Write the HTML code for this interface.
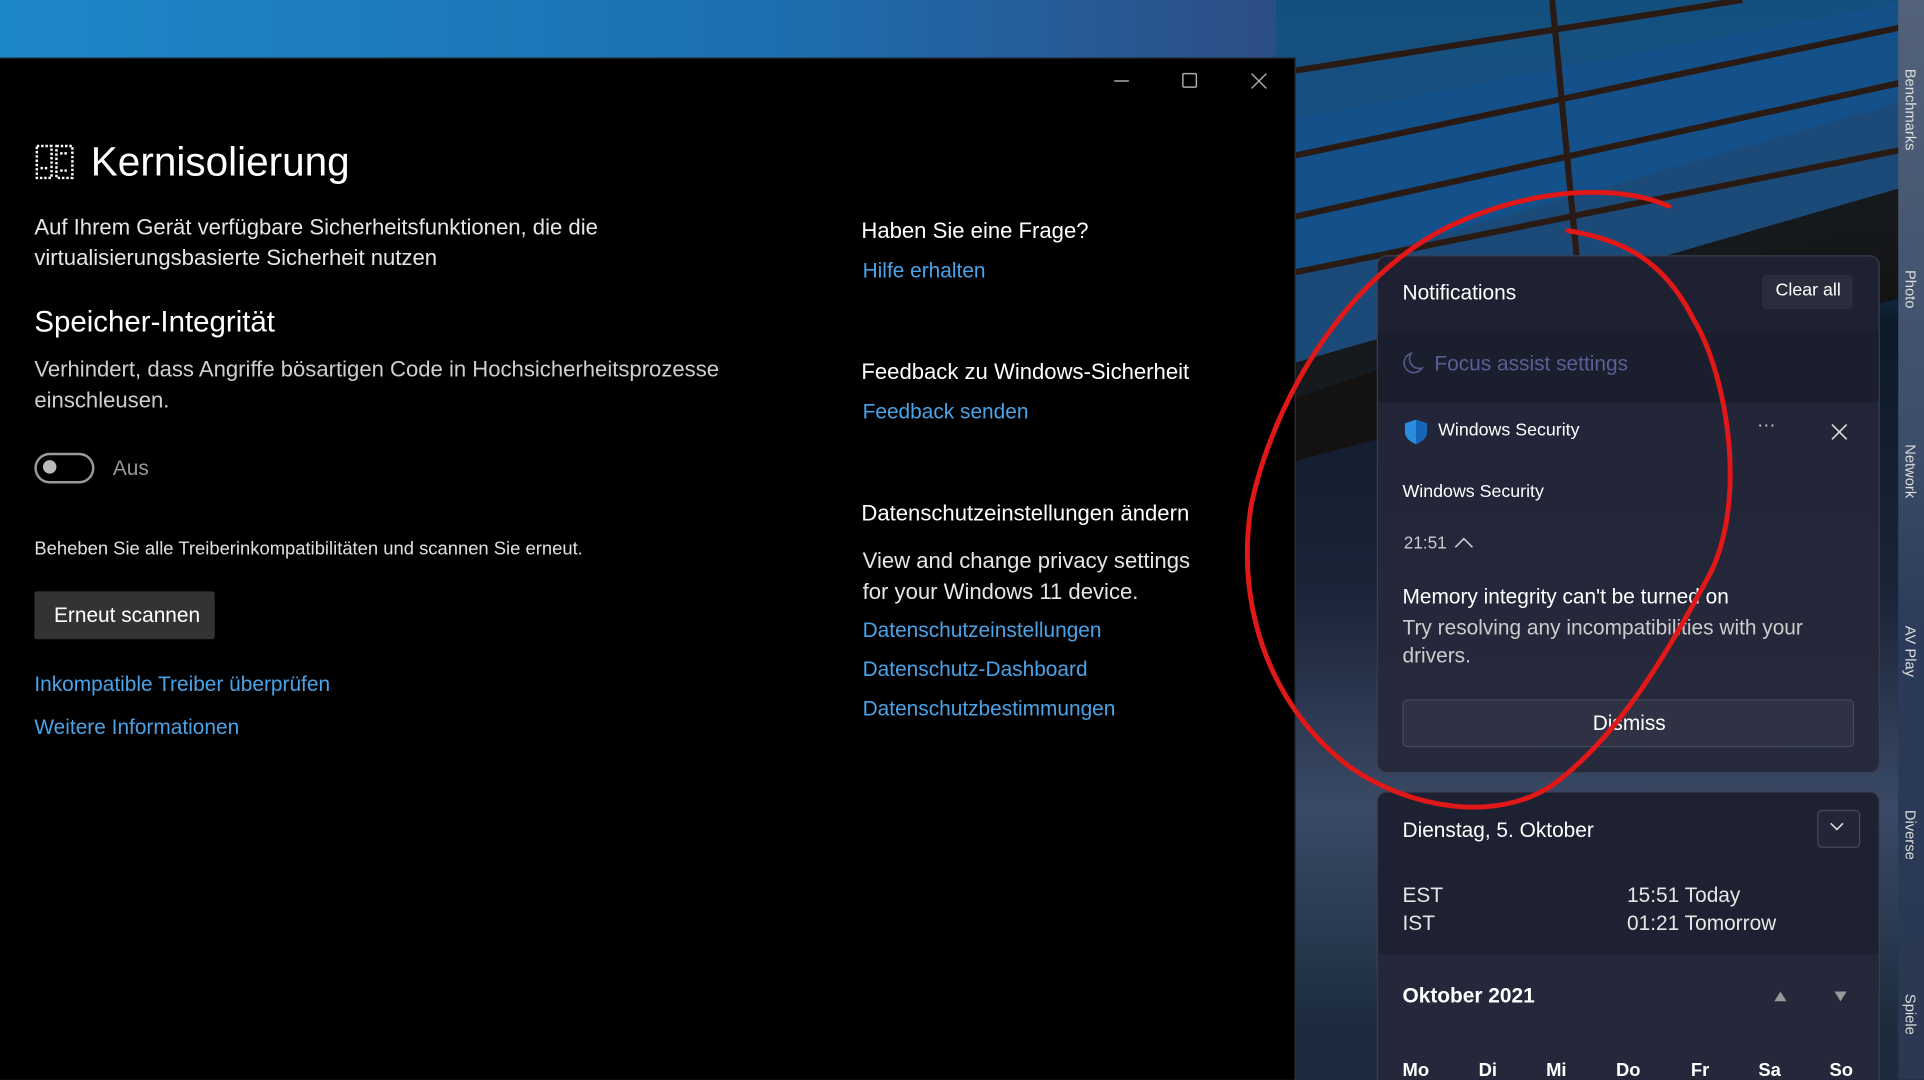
<!DOCTYPE html>
<html><head><meta charset="utf-8"><style>
html,body{margin:0;padding:0;width:1924px;height:1080px;overflow:hidden;background:#0a1a2e}
#s{position:absolute;left:0;top:0;width:1568px;height:880px;transform:scale(1.22704);transform-origin:0 0;font-family:"Liberation Sans",sans-serif;overflow:hidden}
.a{position:absolute;white-space:nowrap}
.w{color:#fff}.g{color:#cfcfcf}.l{color:#4aa3e8}
</style></head><body><div id="s">
<!-- background -->
<div class="a" style="left:0;top:0;width:1568px;height:880px;background:linear-gradient(90deg,#1d88c9 0%,#1d6fb0 40%,#2c4f88 65%,#1f3d6e 100%)"></div>
<div class="a" style="left:1040px;top:0;width:520px;height:880px;background:linear-gradient(180deg,#14507f 0%,#1a4e80 20%,#0c1a28 30%,#1b2438 55%,#3a4a66 75%,#1c2c3e 95%)"></div>
<svg class="a" style="left:1040px;top:0" width="520" height="880">
<polygon points="0,100 520,0 520,150 0,330" fill="#14508a"/>
<polygon points="0,230 520,80 520,170 0,320" fill="#1c4a78"/>
<polygon points="0,300 520,150 520,240 0,380" fill="#15100c" opacity="0.85"/>
<g stroke="#2a1a14" stroke-width="5"><line x1="0" y1="60" x2="380" y2="0"/><line x1="0" y1="130" x2="520" y2="20"/><line x1="0" y1="180" x2="520" y2="65"/><line x1="0" y1="225" x2="520" y2="120"/><line x1="225" y1="0" x2="245" y2="210"/></g>
</svg>
<!-- side strip -->
<div class="a" style="left:1547px;top:0;width:21px;height:880px;background:linear-gradient(180deg,#53627a,#3c4e6a 40%,#2a3a58 60%,#2a3850)"></div>
<div class="a" style="left:1550px;top:56px;writing-mode:vertical-rl;font-size:12px;color:#ddd">Benchmarks</div>
<div class="a" style="left:1550px;top:220px;writing-mode:vertical-rl;font-size:12px;color:#ddd">Photo</div>
<div class="a" style="left:1550px;top:362px;writing-mode:vertical-rl;font-size:12px;color:#ddd">Network</div>
<div class="a" style="left:1550px;top:510px;writing-mode:vertical-rl;font-size:12px;color:#ddd">AV Play</div>
<div class="a" style="left:1550px;top:660px;writing-mode:vertical-rl;font-size:12px;color:#ddd">Diverse</div>
<div class="a" style="left:1550px;top:810px;writing-mode:vertical-rl;font-size:12px;color:#ddd">Spiele</div>
<!-- window -->
<div class="a" style="left:0;top:47px;width:1055px;height:840px;background:#000;border-right:1px solid #333;border-top:1px solid #222"></div>
<svg class="a" style="left:900px;top:55px" width="140" height="22" stroke="#aaa" stroke-width="1.2" fill="none">
<line x1="8" y1="11" x2="20" y2="11"/><rect x="64" y="5" width="11" height="11" rx="1"/><line x1="120" y1="5" x2="132" y2="17"/><line x1="132" y1="5" x2="120" y2="17"/></svg>
<svg class="a" style="left:28px;top:117px" width="33" height="30" fill="none" stroke="#fff" stroke-width="2" stroke-dasharray="2 1.5"><rect x="2" y="2" width="12" height="26"/><rect x="18" y="2" width="13" height="26"/><line x1="5" y1="20" x2="11" y2="20"/><line x1="21" y1="22" x2="28" y2="22"/><line x1="21" y1="8" x2="28" y2="8"/></svg>
<div class="a w" style="left:74px;top:113px;font-size:33px;font-weight:300">Kernisolierung</div>
<div class="a" style="left:28px;top:173px;font-size:18px;line-height:24.5px;color:#e6e6e6">Auf Ihrem Gerät verfügbare Sicherheitsfunktionen, die die<br>virtualisierungsbasierte Sicherheit nutzen</div>
<div class="a w" style="left:28px;top:249px;font-size:24px">Speicher-Integrität</div>
<div class="a g" style="left:28px;top:289px;font-size:18px;line-height:24.5px">Verhindert, dass Angriffe bösartigen Code in Hochsicherheitsprozesse<br>einschleusen.</div>
<div class="a" style="left:28px;top:369px;width:45px;height:21px;border:2px solid #999;border-radius:14px"></div>
<div class="a" style="left:35px;top:375px;width:11px;height:11px;border-radius:50%;background:#bbb"></div>
<div class="a" style="left:92px;top:372px;font-size:17px;color:#999">Aus</div>
<div class="a" style="left:28px;top:439px;font-size:15px;color:#e0e0e0">Beheben Sie alle Treiberinkompatibilitäten und scannen Sie erneut.</div>
<div class="a" style="left:28px;top:482px;width:147px;height:39px;background:#333;border-radius:2px"></div>
<div class="a w" style="left:44px;top:492px;font-size:17px">Erneut scannen</div>
<div class="a l" style="left:28px;top:548px;font-size:17px">Inkompatible Treiber überprüfen</div>
<div class="a l" style="left:28px;top:583px;font-size:17px">Weitere Informationen</div>
<div class="a w" style="left:702px;top:178px;font-size:18px">Haben Sie eine Frage?</div>
<div class="a l" style="left:703px;top:211px;font-size:17px">Hilfe erhalten</div>
<div class="a w" style="left:702px;top:293px;font-size:18px">Feedback zu Windows-Sicherheit</div>
<div class="a l" style="left:703px;top:326px;font-size:17px">Feedback senden</div>
<div class="a w" style="left:702px;top:408px;font-size:18px">Datenschutzeinstellungen ändern</div>
<div class="a" style="left:703px;top:445px;font-size:18px;line-height:24.5px;color:#e6e6e6">View and change privacy settings<br>for your Windows 11 device.</div>
<div class="a l" style="left:703px;top:504px;font-size:17px">Datenschutzeinstellungen</div>
<div class="a l" style="left:703px;top:536px;font-size:17px">Datenschutz-Dashboard</div>
<div class="a l" style="left:703px;top:568px;font-size:17px">Datenschutzbestimmungen</div>
<!-- notification panel -->
<div class="a" style="left:1122px;top:208px;width:408px;height:420px;background:#1e2131;border:1px solid #3a3e50;border-radius:8px;overflow:hidden">
 <div class="a" style="left:0;top:62px;width:408px;height:57px;background:#1b1e2d"></div>
 <div class="a" style="left:0;top:119px;width:408px;height:301px;background:linear-gradient(180deg,#222538,#262a3c)"></div>
</div>
<div class="a w" style="left:1143px;top:229px;font-size:17px">Notifications</div>
<div class="a" style="left:1436px;top:224px;width:74px;height:28px;background:#2a2d3c;border-radius:4px"></div>
<div class="a w" style="left:1447px;top:229px;font-size:14.5px">Clear all</div>
<svg class="a" style="left:1142px;top:286px" width="20" height="20"><path d="M8 2 A8 8 0 1 0 17 14 A8 8 0 0 1 8 2Z" fill="none" stroke="#555a88" stroke-width="1.3"/></svg>
<div class="a" style="left:1169px;top:287px;font-size:17px;color:#5a5f95">Focus assist settings</div>
<svg class="a" style="left:1143px;top:341px" width="22" height="22"><path d="M11 1 L20 4 V11 C20 16 16 19 11 21 C6 19 2 16 2 11 V4Z" fill="#2a8ee0"/><path d="M11 1 L20 4 V11 C20 16 16 19 11 21Z" fill="#1565b8"/></svg>
<div class="a w" style="left:1172px;top:343px;font-size:14.5px">Windows Security</div>
<div class="a" style="left:1432px;top:338px;font-size:15px;color:#ccc">···</div>
<svg class="a" style="left:1492px;top:345px" width="14" height="14" stroke="#ddd" stroke-width="1.3"><line x1="1" y1="1" x2="13" y2="13"/><line x1="13" y1="1" x2="1" y2="13"/></svg>
<div class="a w" style="left:1143px;top:393px;font-size:14.5px">Windows Security</div>
<div class="a" style="left:1144px;top:434px;font-size:14px;color:#ccc">21:51</div>
<svg class="a" style="left:1185px;top:436px" width="16" height="12" stroke="#ccc" stroke-width="1.3" fill="none"><path d="M1 10 L8 3 L15 10"/></svg>
<div class="a w" style="left:1143px;top:477px;font-size:17px">Memory integrity can't be turned on</div>
<div class="a" style="left:1143px;top:500px;font-size:17px;line-height:23px;color:#ccc">Try resolving any incompatibilities with your<br>drivers.</div>
<div class="a" style="left:1143px;top:570px;width:366px;height:37px;background:#2e3244;border:1px solid #434858;border-radius:4px"></div>
<div class="a w" style="left:1298px;top:580px;font-size:17px">Dismiss</div>
<!-- calendar -->
<div class="a" style="left:1122px;top:645px;width:408px;height:260px;background:#1e2131;border:1px solid #3a3e50;border-radius:8px;overflow:hidden">
 <div class="a" style="left:0;top:132px;width:408px;height:130px;background:#25283a"></div>
</div>
<div class="a w" style="left:1143px;top:667px;font-size:17px">Dienstag, 5. Oktober</div>
<div class="a" style="left:1481px;top:660px;width:33px;height:29px;border:1px solid #444a5c;border-radius:4px;background:#232637"></div>
<svg class="a" style="left:1491px;top:670px" width="12" height="8" stroke="#ddd" stroke-width="1.3" fill="none"><path d="M1 1 L6 6 L11 1"/></svg>
<div class="a" style="left:1143px;top:718px;font-size:17px;line-height:23px;color:#e6e6e6">EST<br>IST</div>
<div class="a" style="left:1326px;top:718px;font-size:17px;line-height:23px;color:#e6e6e6">15:51 Today<br>01:21 Tomorrow</div>
<div class="a w" style="left:1143px;top:802px;font-size:17px;font-weight:bold">Oktober 2021</div>
<svg class="a" style="left:1444px;top:806px" width="70" height="12" fill="#999"><path d="M2 10 L7 2 L12 10Z"/><path d="M51 2 L61 2 L56 10Z"/></svg>
<div class="a w" style="left:1143px;top:864px;font-size:15px;font-weight:bold;word-spacing:0">Mo</div>
<div class="a w" style="left:1205px;top:864px;font-size:15px;font-weight:bold">Di</div>
<div class="a w" style="left:1260px;top:864px;font-size:15px;font-weight:bold">Mi</div>
<div class="a w" style="left:1317px;top:864px;font-size:15px;font-weight:bold">Do</div>
<div class="a w" style="left:1378px;top:864px;font-size:15px;font-weight:bold">Fr</div>
<div class="a w" style="left:1433px;top:864px;font-size:15px;font-weight:bold">Sa</div>
<div class="a w" style="left:1491px;top:864px;font-size:15px;font-weight:bold">So</div>
<!-- red marker -->
<svg class="a" style="left:0;top:0" width="1568" height="880" fill="none" stroke="#e01818" stroke-width="4" stroke-linecap="round">
<path d="M1360 168 C1320 150 1250 152 1180 185 C1100 225 1040 320 1020 410 C1005 500 1040 580 1100 625 C1150 660 1220 670 1265 640 C1320 600 1360 530 1395 465 C1425 400 1405 300 1380 260 C1355 210 1320 195 1278 188"/>
</svg>
</div></body></html>
